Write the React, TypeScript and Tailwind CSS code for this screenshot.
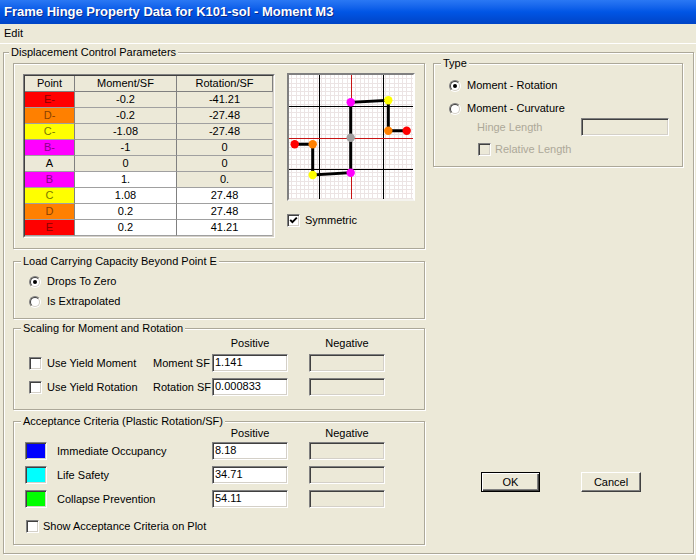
import React from "react";

const sunken =
  "border border-t-[#808080] border-l-[#808080] border-r-white border-b-white shadow-[inset_1px_1px_0_#404040,inset_-1px_-1px_0_#d4d0c8]";

function Group({
  label,
  lx = "ml-[7px]",
  className = "",
  children,
}: {
  label?: string;
  lx?: string;
  className?: string;
  children?: React.ReactNode;
}) {
  return (
    <div
      className={`border border-[#aca899] shadow-[inset_1px_1px_0_#fff,1px_1px_0_#fff] flex flex-col ${className}`}
    >
      {label && (
        <div className={`-mt-[7px] ${lx} w-fit bg-[#ece9d8] px-[2px] leading-[13px] h-[13px]`}>{label}</div>
      )}
      {children}
    </div>
  );
}

function Radio({ checked }: { checked?: boolean }) {
  return (
    <div className="w-[12px] h-[12px] shrink-0 rounded-full border border-t-[#808080] border-l-[#808080] border-r-white border-b-white">
      <div className="w-full h-full rounded-full bg-white border border-t-[#404040] border-l-[#404040] border-r-[#d4d0c8] border-b-[#d4d0c8] flex items-center justify-center">
        {checked && <div className="w-[4px] h-[4px] rounded-full bg-black" />}
      </div>
    </div>
  );
}

function Check({ checked, disabled }: { checked?: boolean; disabled?: boolean }) {
  return (
    <div
      className={`w-[13px] h-[13px] shrink-0 flex items-center justify-center ${sunken} ${
        disabled ? "bg-[#ece9d8]" : "bg-white"
      }`}
    >
      {checked && (
        <svg width="9" height="9" viewBox="0 0 9 9">
          <path d="M1.2 3.8 L3.4 6.2 L7.8 1.6" fill="none" stroke="#000" strokeWidth="1.9" />
        </svg>
      )}
    </div>
  );
}

function Field({ value, disabled, w = "w-[76px]" }: { value?: string; disabled?: boolean; w?: string }) {
  return (
    <div
      className={`h-[18px] ${w} shrink-0 ${sunken} ${disabled ? "bg-[#ece9d8]" : "bg-white"} px-[2px] leading-[15px]`}
    >
      {value}
    </div>
  );
}

const rows = [
  { p: "E-", bg: "bg-[#ff0000]", fg: "text-[#8a0000]", m: "-0.2", r: "-41.21", mw: false, rw: false },
  { p: "D-", bg: "bg-[#ff8000]", fg: "text-[#8a4000]", m: "-0.2", r: "-27.48", mw: false, rw: false },
  { p: "C-", bg: "bg-[#ffff00]", fg: "text-[#7a7a00]", m: "-1.08", r: "-27.48", mw: false, rw: false },
  { p: "B-", bg: "bg-[#ff00ff]", fg: "text-[#8a008a]", m: "-1", r: "0", mw: false, rw: false },
  { p: "A", bg: "bg-[#ece9d8]", fg: "text-black", m: "0", r: "0", mw: false, rw: false },
  { p: "B", bg: "bg-[#ff00ff]", fg: "text-[#8a008a]", m: "1.", r: "0.", mw: true, rw: false },
  { p: "C", bg: "bg-[#ffff00]", fg: "text-[#7a7a00]", m: "1.08", r: "27.48", mw: true, rw: true },
  { p: "D", bg: "bg-[#ff8000]", fg: "text-[#8a4000]", m: "0.2", r: "27.48", mw: true, rw: true },
  { p: "E", bg: "bg-[#ff0000]", fg: "text-[#8a0000]", m: "0.2", r: "41.21", mw: true, rw: true },
];

function Table() {
  const cell = "h-[16px] leading-[15px] text-center border-b border-r";
  return (
    <div className="mt-[1px] border-t border-l border-t-[#808080] border-l-[#808080] border-r border-b border-r-white border-b-white">
      <div className="border-t border-l border-t-[#404040] border-l-[#404040] border-r border-b border-r-[#d4d0c8] border-b-[#d4d0c8] flex flex-col">
        <div className="flex bg-[#ece9d8]">
          <div className={`${cell} w-[50px] border-b-[#808080] border-r-[#808080]`}>Point</div>
          <div className={`${cell} w-[102px] border-b-[#808080] border-r-[#808080]`}>Moment/SF</div>
          <div className={`${cell} w-[96px] border-b-[#808080] border-r-[#808080]`}>Rotation/SF</div>
        </div>
        {rows.map((row, i) => (
          <div key={i} className="flex">
            <div className={`${cell} w-[50px] border-b-[#a0a0a0] border-r-[#808080] ${row.bg} ${row.fg}`}>{row.p}</div>
            <div
              className={`${cell} w-[102px] border-b-[#a0a0a0] border-r-[#808080] ${
                row.mw ? "bg-white" : "bg-[#ece9d8]"
              }`}
            >
              {row.m}
            </div>
            <div
              className={`${cell} w-[96px] border-b-[#a0a0a0] border-r-[#d4d0c8] ${
                row.rw ? "bg-white" : "bg-[#ece9d8]"
              }`}
            >
              {row.r}
            </div>
          </div>
        ))}
      </div>
    </div>
  );
}

function Plot() {
  const step = 64 / 15;
  const minor: number[] = [];
  for (let k = -15; k <= 15; k++) {
    const v = 62 + k * step;
    if (v > 0 && v < 124) minor.push(Math.round(v) + 0.5);
  }
  const minorY: number[] = [];
  for (let k = -15; k <= 15; k++) {
    const v = 63 + k * step;
    if (v > 0 && v < 124) minorY.push(Math.round(v) + 0.5);
  }
  const pts: [number, number, string][] = [
    [5.7, 69.3, "#ff0000"],
    [23.7, 69.3, "#ff8000"],
    [23.7, 100, "#ffff00"],
    [61.7, 97.7, "#ff00ff"],
    [61.7, 62.7, "#a0a0a0"],
    [61.7, 27.3, "#ff00ff"],
    [99.3, 25.3, "#ffff00"],
    [99.3, 55.7, "#ff8000"],
    [117.7, 55.7, "#ff0000"],
  ];
  return (
    <div className="w-[128px] h-[128px] border-2 border-t-[#808080] border-l-[#808080] border-r-white border-b-[#f4f3ee] bg-white">
      <svg width="124" height="124" viewBox="0 0 124 124" className="block">
        {minor.map((x) => (
          <line key={"x" + x} x1={x} y1={0} x2={x} y2={124} stroke="#ece4e4" strokeWidth="1" />
        ))}
        {minorY.map((y) => (
          <line key={"y" + y} x1={0} y1={y} x2={124} y2={y} stroke="#ece4e4" strokeWidth="1" />
        ))}
        <line x1={30.5} y1={0} x2={30.5} y2={124} stroke="#000" />
        <line x1={94.5} y1={0} x2={94.5} y2={124} stroke="#000" />
        <line x1={0} y1={31.5} x2={124} y2={31.5} stroke="#000" />
        <line x1={0} y1={94.5} x2={124} y2={94.5} stroke="#000" />
        <line x1={62.5} y1={0} x2={62.5} y2={124} stroke="#c81414" />
        <line x1={0} y1={63.5} x2={124} y2={63.5} stroke="#c81414" />
        <polyline
          points={pts.map((p) => `${p[0]},${p[1]}`).join(" ")}
          fill="none"
          stroke="#000"
          strokeWidth="3"
        />
        {pts.map((p, i) => (
          <circle key={i} cx={p[0]} cy={p[1]} r="4.2" fill={p[2]} />
        ))}
      </svg>
    </div>
  );
}

function AcceptRow({ color, label, value, mt }: { color: string; label: string; value: string; mt: string }) {
  return (
    <div className={`flex items-center h-[18px] ${mt}`}>
      <div className={`ml-[11px] w-[22px] h-[18px] ${sunken} ${color}`} />
      <div className="ml-[10px] w-[155px]">{label}</div>
      <Field value={value} />
      <div className="ml-[21px]">
        <Field disabled />
      </div>
    </div>
  );
}

function Btn({ label, def, className = "" }: { label: string; def?: boolean; className?: string }) {
  return (
    <div
      className={`h-[20px] flex items-center justify-center ${
        def
          ? "border border-black shadow-[inset_1px_1px_0_#fff,inset_-1px_-1px_0_#404040,inset_-2px_-2px_0_#808080]"
          : "border border-t-white border-l-white border-r-[#404040] border-b-[#404040] shadow-[inset_-1px_-1px_0_#808080]"
      } ${className}`}
    >
      {label}
    </div>
  );
}

export default function App() {
  return (
    <div className="w-[696px] h-[560px] bg-[#ece9d8] flex flex-col font-['Liberation_Sans',Arial,sans-serif] text-[11px] text-black overflow-hidden">
      <div className="h-[24px] shrink-0 bg-linear-to-b from-[#2a78f4] via-[#0055e5] to-[#0044c6] flex items-center pl-[4px]">
        <span className="text-white font-bold text-[13px] [text-shadow:1px_1px_0_#0b2a8a]">
          Frame Hinge Property Data for K101-sol - Moment M3
        </span>
      </div>
      <div className="h-[20px] shrink-0 border-b border-white flex items-center pl-[4px]">Edit</div>

      <Group label="Displacement Control Parameters" lx="ml-[5px]" className="mt-[8px] ml-[3px] w-[691px] h-[502px]">
        <div className="flex pl-[9px]">
          <div className="w-[412px] flex flex-col">
            <Group className="mt-[4px] h-[186px]">
              <div className="flex items-start mt-[9px] ml-[9px]">
                <Table />
                <div className="ml-[12px] flex flex-col">
                  <Plot />
                  <div className="flex items-center mt-[11px]">
                    <Check checked />
                    <span className="ml-[5px]">Symmetric</span>
                  </div>
                </div>
              </div>
            </Group>

            <Group label="Load Carrying Capacity Beyond Point E" className="mt-[12px] h-[58px]">
              <div className="flex items-center mt-[7px] ml-[15px] h-[13px]">
                <Radio checked />
                <span className="ml-[6px]">Drops To Zero</span>
              </div>
              <div className="flex items-center mt-[7px] ml-[15px] h-[13px]">
                <Radio />
                <span className="ml-[6px]">Is Extrapolated</span>
              </div>
            </Group>

            <Group label="Scaling for Moment and Rotation" className="mt-[9px] h-[82px]">
              <div className="flex h-[13px] leading-[13px] mt-[2px]">
                <div className="ml-[198px] w-[76px] text-center">Positive</div>
                <div className="ml-[21px] w-[76px] text-center">Negative</div>
              </div>
              <div className="flex items-center h-[18px] mt-[4px]">
                <div className="ml-[15px]">
                  <Check />
                </div>
                <div className="ml-[5px] w-[106px]">Use Yield Moment</div>
                <div className="w-[59px]">Moment SF</div>
                <Field value="1.141" />
                <div className="ml-[21px]">
                  <Field disabled />
                </div>
              </div>
              <div className="flex items-center h-[18px] mt-[6px]">
                <div className="ml-[15px]">
                  <Check />
                </div>
                <div className="ml-[5px] w-[106px]">Use Yield Rotation</div>
                <div className="w-[59px]">Rotation SF</div>
                <Field value="0.000833" />
                <div className="ml-[21px]">
                  <Field disabled />
                </div>
              </div>
            </Group>

            <Group label="Acceptance Criteria (Plastic Rotation/SF)" className="mt-[11px] h-[124px]">
              <div className="flex h-[13px] leading-[13px] -mt-[1px]">
                <div className="ml-[198px] w-[76px] text-center">Positive</div>
                <div className="ml-[21px] w-[76px] text-center">Negative</div>
              </div>
              <AcceptRow color="bg-[#0000ff]" label="Immediate Occupancy" value="8.18" mt="mt-[2px]" />
              <AcceptRow color="bg-[#00ffff]" label="Life Safety" value="34.71" mt="mt-[6px]" />
              <AcceptRow color="bg-[#00ff00]" label="Collapse Prevention" value="54.11" mt="mt-[6px]" />
              <div className="flex items-center mt-[12px] ml-[12px] h-[13px]">
                <Check />
                <span className="ml-[4px]">Show Acceptance Criteria on Plot</span>
              </div>
            </Group>
          </div>

          <div className="ml-[8px] w-[250px] flex flex-col">
            <Group label="Type" className="mt-[4px] h-[104px]">
              <div className="flex items-center mt-[9px] ml-[15px] h-[13px]">
                <Radio checked />
                <span className="ml-[6px]">Moment - Rotation</span>
              </div>
              <div className="flex items-center mt-[10px] ml-[15px] h-[13px]">
                <Radio />
                <span className="ml-[6px]">Moment - Curvature</span>
              </div>
              <div className="flex items-center mt-[3px] ml-[43px] h-[18px]">
                <div className="w-[104px] text-[#aca899]">Hinge Length</div>
                <Field disabled w="w-[88px]" />
              </div>
              <div className="flex items-center mt-[7px] ml-[44px] h-[13px]">
                <Check disabled />
                <span className="ml-[4px] text-[#aca899]">Relative Length</span>
              </div>
            </Group>
            <div className="flex mt-[305px] ml-[48px]">
              <Btn label="OK" def className="w-[59px]" />
              <Btn label="Cancel" className="ml-[41px] w-[60px]" />
            </div>
          </div>
        </div>
      </Group>
    </div>
  );
}
